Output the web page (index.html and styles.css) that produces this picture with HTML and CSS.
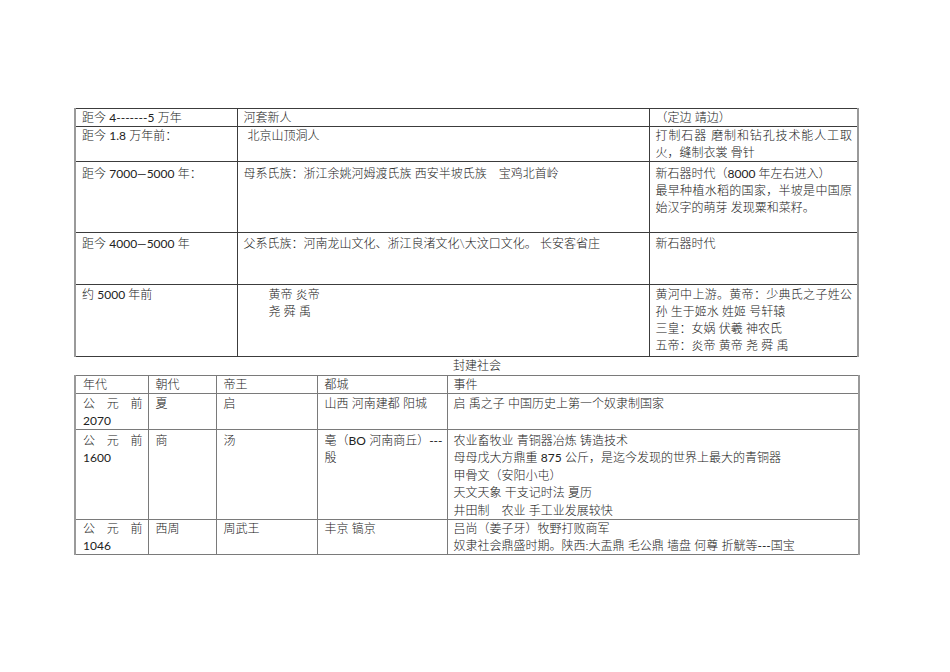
FILE: index.html
```html
<!DOCTYPE html>
<html lang="zh">
<head>
<meta charset="utf-8">
<title>历史年表</title>
<link rel="stylesheet" href="styles.css">
</head>
<body>
<div class="page">
  <table class="t1">
    <colgroup><col class="c1"><col class="c2"><col class="c3"></colgroup>
    <tr class="r1">
      <td>距今 <span class="n">4-------5</span> 万年</td>
      <td>河套新人</td>
      <td>（定边 靖边）</td>
    </tr>
    <tr class="r2">
      <td>距今 <span class="n">1.8</span> 万年前：</td>
      <td><span class="ind1">北京山顶洞人</span></td>
      <td><div class="jl">打制石器 磨制和钻孔技术能人工取</div><div>火，缝制衣裳 骨针</div></td>
    </tr>
    <tr class="r3">
      <td>距今 <span class="n">7000—5000</span> 年：</td>
      <td>母系氏族：浙江余姚河姆渡氏族 西安半坡氏族　宝鸡北首岭</td>
      <td><div>新石器时代（<span class="n">8000</span> 年左右进入）</div><div class="jl">最早种植水稻的国家，半坡是中国原</div><div>始汉字的萌芽 发现粟和菜籽。</div></td>
    </tr>
    <tr class="r4">
      <td>距今 <span class="n">4000—5000</span> 年</td>
      <td>父系氏族：河南龙山文化、浙江良渚文化\大汶口文化。 长安客省庄</td>
      <td>新石器时代</td>
    </tr>
    <tr class="r5">
      <td>约 <span class="n">5000</span> 年前</td>
      <td><div class="ind2">黄帝 炎帝</div><div class="ind2">尧 舜 禹</div></td>
      <td><div class="jl">黄河中上游。黄帝：少典氏之子姓公</div><div>孙 生于姬水 姓姬 号轩辕</div><div>三皇：女娲 伏羲 神农氏</div><div>五帝：炎帝 黄帝 尧 舜 禹</div></td>
    </tr>
  </table>
  <div class="caption">封建社会</div>
  <table class="t2">
    <colgroup><col class="d1"><col class="d2"><col class="d3"><col class="d4"><col class="d5"></colgroup>
    <tr class="h">
      <td>年代</td><td>朝代</td><td>帝王</td><td>都城</td><td>事件</td>
    </tr>
    <tr class="s1">
      <td><div class="jw"><span>公</span><span>元</span><span>前</span></div><div class="n">2070</div></td>
      <td>夏</td>
      <td>启</td>
      <td>山西 河南建都 阳城</td>
      <td>启 禹之子 中国历史上第一个奴隶制国家</td>
    </tr>
    <tr class="s2">
      <td><div class="jw"><span>公</span><span>元</span><span>前</span></div><div class="n">1600</div></td>
      <td>商</td>
      <td>汤</td>
      <td><div class="jl">亳（<span class="n">BO</span> 河南商丘）<span class="n">---</span></div><div>殷</div></td>
      <td><div>农业畜牧业 青铜器冶炼 铸造技术</div><div>母母戊大方鼎重 <span class="n">875</span> 公斤，是迄今发现的世界上最大的青铜器</div><div>甲骨文（安阳小屯）</div><div>天文天象 干支记时法 夏历</div><div>井田制　农业 手工业发展较快</div></td>
    </tr>
    <tr class="s3">
      <td><div class="jw"><span>公</span><span>元</span><span>前</span></div><div class="n">1046</div></td>
      <td>西周</td>
      <td>周武王</td>
      <td>丰京 镐京</td>
      <td><div>吕尚（姜子牙）牧野打败商军</div><div>奴隶社会鼎盛时期。陕西:大盂鼎 毛公鼎 墙盘 何尊 折觥等<span class="n">---</span>国宝</div></td>
    </tr>
  </table>
</div>
</body>
</html>
```
FILE: styles.css
```css
html, body {
  margin: 0;
  padding: 0;
  background: #ffffff;
}
body {
  font-family: "Lato", "Noto Sans CJK SC", sans-serif;
  font-size: 12px;
  font-weight: 300;
  line-height: 17px;
  color: #222222;
}
.n {
  font-weight: 400;
}
.page {
  padding: 108px 0 0 74px;
}
table {
  border-collapse: collapse;
  table-layout: fixed;
}
td {
  padding: 0 5px 0 6px;
  vertical-align: top;
  overflow: hidden;
  white-space: nowrap;
}
.t1 {
  width: 783px;
  border-left: 2px solid #9a9a9a;
  border-right: 2px solid #9a9a9a;
}
.t1 td {
  border: 1px solid #3c3c3c;
}
.t1 td:first-child { border-left: 2px solid #9a9a9a; }
.t1 td:last-child { border-right: 2px solid #9a9a9a; }
.c1 { width: 162px; }
.c2 { width: 412px; }
.c3 { width: 209px; }
.r1 { height: 16px; }
.r2 { height: 34px; }
.r3 { height: 71px; }
.r4 { height: 52px; }
.r5 { height: 72px; }
.r3 td { padding-top: 3px; }
.r4 td { padding-top: 2px; }
.r5 td { padding-top: 1px; }
.jl {
  text-align: justify;
  text-align-last: justify;
}
.ind1 { padding-left: 4px; }
.ind2 { padding-left: 25px; }
.caption {
  padding-left: 379px;
  height: 18px;
  line-height: 18px;
}
.t2 {
  width: 784px;
}
.t2 td {
  border: 1px solid #7a7a7a;
  padding: 0 5px 0 7px;
}
.t2 td:first-child { border-left: 2px solid #9a9a9a; }
.t2 td:last-child { border-right: 2px solid #9a9a9a; padding-left: 6px; }
.d1 { width: 73px; }
.d2 { width: 68px; }
.d3 { width: 101px; }
.d4 { width: 130px; }
.d5 { width: 412px; }
.h { height: 17px; }
.s1 { height: 35px; }
.s2 { height: 90px; }
.s3 { height: 34px; }
.s1 td { padding-top: 1px; }
.s2 td { padding-top: 2px; line-height: 17.4px; }
.jw {
  display: flex;
  justify-content: space-between;
}
```
